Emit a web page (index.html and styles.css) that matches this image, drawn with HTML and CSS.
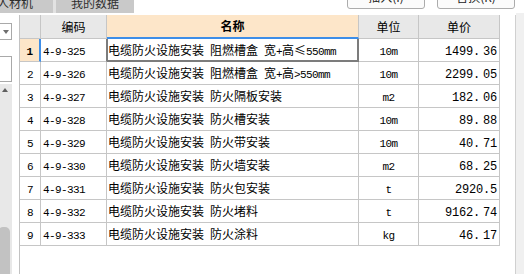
FILE: index.html
```html
<!DOCTYPE html>
<html lang="zh-CN">
<head>
<meta charset="utf-8">
<title>定额清单</title>
<link rel="stylesheet" href="styles.css">
</head>
<body>
<div class="app">
  <div class="topbar">
    <div class="tab tab-first"><span class="tab-label">人材机</span></div>
    <div class="tab tab-second"><span class="tab-label">我的数据</span></div>
    <div class="spacer"></div>
    <button class="btn">插入(I)</button>
    <button class="btn">替换(R)</button>
    <div class="topbar-end"></div>
  </div>
  <div class="main">
    <aside class="side">
      <div class="combo"><span class="combo-arrow"></span></div>
      <div class="field"></div>
      <div class="vscroll">
        <span class="vscroll-up"></span>
        <div class="vscroll-thumb"></div>
      </div>
    </aside>
    <section class="grid-wrap">
      <div class="grid">
        <div class="hd"></div>
        <div class="hd">编码</div>
        <div class="hd hd-active">名称</div>
        <div class="hd">单位</div>
        <div class="hd">单价</div>

        <div class="rn rn-active"><i>1</i></div>
        <div class="cd cd-active"><i>4-9-325</i></div>
        <div class="nm nm-current">电缆防火设施安装<i> </i>阻燃槽盒<i> </i>宽<i>+</i>高<b>≤</b><i>550mm</i></div>
        <div class="un"><i>10m</i></div>
        <div class="pr"><i>1499.<span class="frac">36</span></i></div>

        <div class="rn"><i>2</i></div>
        <div class="cd"><i>4-9-326</i></div>
        <div class="nm">电缆防火设施安装<i> </i>阻燃槽盒<i> </i>宽<i>+</i>高<i>&gt;550mm</i></div>
        <div class="un"><i>10m</i></div>
        <div class="pr"><i>2299.<span class="frac">05</span></i></div>

        <div class="rn"><i>3</i></div>
        <div class="cd"><i>4-9-327</i></div>
        <div class="nm">电缆防火设施安装<i> </i>防火隔板安装</div>
        <div class="un"><i>m2</i></div>
        <div class="pr"><i>182.<span class="frac">06</span></i></div>

        <div class="rn"><i>4</i></div>
        <div class="cd"><i>4-9-328</i></div>
        <div class="nm">电缆防火设施安装<i> </i>防火槽安装</div>
        <div class="un"><i>10m</i></div>
        <div class="pr"><i>89.<span class="frac">88</span></i></div>

        <div class="rn"><i>5</i></div>
        <div class="cd"><i>4-9-329</i></div>
        <div class="nm">电缆防火设施安装<i> </i>防火带安装</div>
        <div class="un"><i>10m</i></div>
        <div class="pr"><i>40.<span class="frac">71</span></i></div>

        <div class="rn"><i>6</i></div>
        <div class="cd"><i>4-9-330</i></div>
        <div class="nm">电缆防火设施安装<i> </i>防火墙安装</div>
        <div class="un"><i>m2</i></div>
        <div class="pr"><i>68.<span class="frac">25</span></i></div>

        <div class="rn"><i>7</i></div>
        <div class="cd"><i>4-9-331</i></div>
        <div class="nm">电缆防火设施安装<i> </i>防火包安装</div>
        <div class="un"><i>t</i></div>
        <div class="pr"><i>2920.5</i></div>

        <div class="rn"><i>8</i></div>
        <div class="cd"><i>4-9-332</i></div>
        <div class="nm">电缆防火设施安装<i> </i>防火堵料</div>
        <div class="un"><i>t</i></div>
        <div class="pr"><i>9162.<span class="frac">74</span></i></div>

        <div class="rn"><i>9</i></div>
        <div class="cd"><i>4-9-333</i></div>
        <div class="nm">电缆防火设施安装<i> </i>防火涂料</div>
        <div class="un"><i>kg</i></div>
        <div class="pr"><i>46.<span class="frac">17</span></i></div>
      </div>
    </section>
    <div class="rail"></div>
  </div>
</div>
</body>
</html>
```

FILE: styles.css
```css
* {
  box-sizing: border-box;
}

html, body {
  margin: 0;
  padding: 0;
  background: #ffffff;
}

body {
  font-family: "Noto Sans CJK SC", "Noto Sans", sans-serif;
  font-size: 12px;
  color: #000000;
}

.app {
  width: 524px;
  height: 274px;
  overflow: hidden;
  display: flex;
  flex-direction: column;
}

/* ---- tab strip and action buttons ---- */
.topbar {
  height: 13px;
  flex: none;
  display: flex;
  align-items: flex-start;
  background: #ffffff;
}

.tab {
  height: 13px;
  background: #c9c9c9;
  overflow: hidden;
  color: #2e2e2e;
  font-size: 12px;
  line-height: 12px;
}

.tab-label {
  display: block;
  margin-top: -3px;
  white-space: nowrap;
}

.tab-first {
  width: 56px;
  border-right: 3px solid #e2e2e2;
}

.tab-first .tab-label {
  margin-left: -3px;
}

.tab-second {
  width: 78px;
  text-align: center;
}

.spacer {
  flex: 1;
}

.btn {
  width: 78px;
  height: 24px;
  margin-top: -15px;
  margin-left: 12px;
  padding: 0;
  border: 1px solid #acacac;
  border-radius: 3px;
  background: #fbfbfb;
  font-family: "Noto Sans CJK SC", sans-serif;
  font-size: 12px;
  line-height: 20px;
  color: #222222;
}

.topbar-end {
  width: 9px;
}

/* ---- body ---- */
.main {
  flex: 1;
  display: flex;
  min-height: 0;
}

.side {
  width: 12px;
  flex: none;
  display: flex;
  flex-direction: column;
  margin-right: 7px;
}

.combo {
  height: 17px;
  width: 16px;
  margin-top: 10px;
  margin-left: -4px;
  border: 1px solid #a9a9a9;
  background: #ffffff;
  padding: 6px 0 0 6px;
}

.combo-arrow {
  display: block;
  width: 0;
  height: 0;
  border-left: 3px solid transparent;
  border-right: 3px solid transparent;
  border-top: 4px solid #6e6e6e;
}

.field {
  height: 26px;
  width: 16px;
  margin-top: 16px;
  margin-left: -4px;
  border: 1px solid #a9a9a9;
  background: #ffffff;
}

.vscroll {
  flex: 1;
  margin-top: 2px;
  background: #e8e8e8;
  display: flex;
  flex-direction: column;
  align-items: flex-start;
  padding: 4px 0 0 2px;
}

.vscroll-up {
  display: block;
  width: 0;
  height: 0;
  border-left: 3px solid transparent;
  border-right: 3px solid transparent;
  border-bottom: 4px solid #5f5f5f;
}

.vscroll-thumb {
  margin-top: auto;
  margin-left: -4px;
  width: 12px;
  height: 47px;
  background: #c2c2c2;
  border-radius: 5px 5px 0 0;
}

/* ---- data grid ---- */
.grid-wrap {
  width: 497px;
  flex: none;
  margin-top: 2px;
  border-left: 1px solid #c2c2c2;
  border-right: 1px solid #d0d0d0;
  background: #ffffff;
}

.grid {
  display: grid;
  grid-template-columns: 21px 66px 252px 60px 81px;
  grid-template-rows: 24px;
  grid-auto-rows: 23px;
  width: 480px;
}

.grid > div {
  border-right: 1px solid #c6c6c6;
  border-bottom: 1px solid #c6c6c6;
  white-space: nowrap;
  overflow: hidden;
  line-height: 22px;
}

.grid i {
  font-style: normal;
  font-family: "Liberation Mono", "DejaVu Sans Mono", monospace;
  font-size: 11px;
  letter-spacing: -0.6px;
  white-space: pre;
}

/* full-width comparison sign inside the name text */
.grid b {
  font-weight: normal;
  display: inline-block;
  width: 12px;
  text-align: center;
}

.hd {
  background: #e8e8e8;
  text-align: center;
  font-size: 12px;
  line-height: 23px !important;
}

.hd-active {
  background: #fde6c9;
  font-weight: bold;
  border-bottom: 2px solid #3d8ee8 !important;
  line-height: 22px !important;
}

.rn {
  text-align: center;
}

.rn-active {
  background: #fde6c9;
  border-right: 2px solid #3d8ee8 !important;
}

.rn-active i {
  font-weight: bold;
}

.cd {
  padding-left: 2px;
}

.cd-active {
  border-right-color: #7c7c7c !important;
}

.nm {
  padding-left: 1px;
}

.nm-current {
  border-right: 2px solid #7c7c7c !important;
  border-bottom: 2px solid #7c7c7c !important;
  box-shadow: inset 1px 0 0 #7c7c7c;
  line-height: 21px !important;
}

.un {
  text-align: center;
}

.pr {
  text-align: right;
  padding-right: 2px;
}

.pr i {
  font-size: 12px;
  letter-spacing: -0.2px;
}

/* two-place decimals sit a little apart from the point */
.frac {
  margin-left: 3px;
}

/* ---- right edge panel ---- */
.rail {
  flex: 1;
  background: #f0f0f0;
}
```
